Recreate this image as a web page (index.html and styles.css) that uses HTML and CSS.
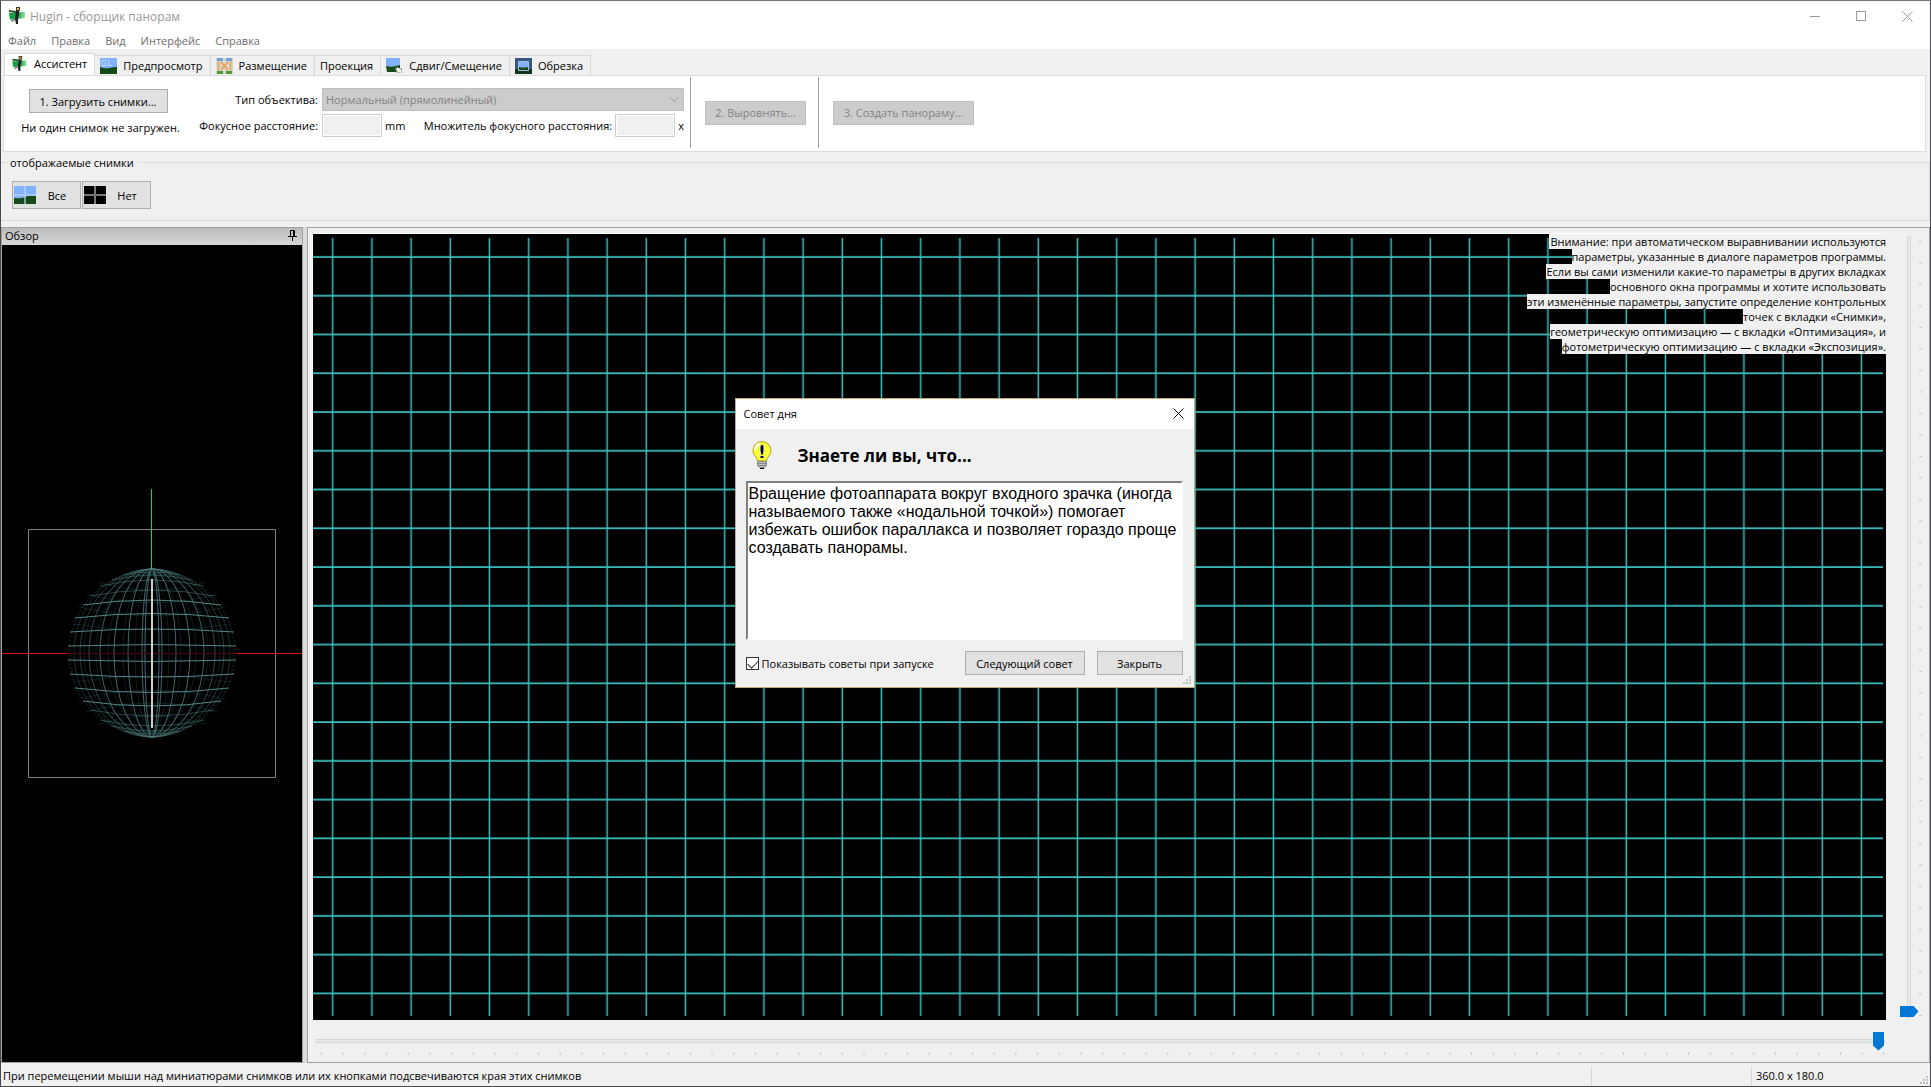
FILE: index.html
```html
<!DOCTYPE html>
<html lang="ru">
<head>
  <meta charset="UTF-8" />
  <meta name="viewport" content="width=device-width, initial-scale=1.0" />
  <title>Hugin - сборщик панорам</title>
  <link rel="stylesheet" href="styles.css">
</head>
<body>
  <!-- shared symbols -->
  <svg class="defs" width="0" height="0" aria-hidden="true">
    <defs>
      <linearGradient id="green" x1="0" y1="0" x2="1" y2="0">
        <stop offset="0" stop-color="#0f9838" />
        <stop offset="1" stop-color="#8fe8a4" />
      </linearGradient>
      <symbol id="logo" viewBox="0 0 16 18">
        <path d="M0 6h7v5l-6 2z" fill="#12a040" />
        <path d="M8 5h8v6l-8 1z" fill="url(#green)" />
        <path d="M0 3l7 1v2L0 5z" fill="#24502f" />
        <path d="M7 4h3v4l-1 3v6H7l-1-5z" fill="#1b2420" />
        <path d="M2 14l4-4v3l-3 2z" fill="#6b7a70" />
        <path d="M7 0h4v4H7z" fill="#3c3722" />
        <path d="M8 1h2v2H8z" fill="#d8c648" />
      </symbol>
      <symbol id="hills" viewBox="0 0 17 16">
        <path d="M0 0h17v16H0z" fill="#80b2ff" />
        <path d="M0 9q5 2 9 1t8-1v7H0z" fill="#164a18" />
      </symbol>
    </defs>
  </svg>

  <div class="window">
    <header class="titlebar">
      <svg class="logo"><use href="#logo" /></svg>
      <h1>Hugin - сборщик панорам</h1>
      <div class="window-buttons">
        <button type="button" aria-label="Свернуть"><svg width="11" height="11"><path d="M0 5.5h10" /></svg></button>
        <button type="button" aria-label="Развернуть"><svg width="11" height="11"><path d="M.5.5h9v9h-9z" /></svg></button>
        <button type="button" aria-label="Закрыть окно"><svg width="11" height="11"><path d="M.5.5l10 10M10.500.5l-10 10" /></svg></button>
      </div>
    </header>

    <nav class="menu">
      <a href="#">Файл</a>
      <a href="#">Правка</a>
      <a href="#">Вид</a>
      <a href="#">Интерфейс</a>
      <a href="#">Справка</a>
    </nav>

    <div class="tabs" role="tablist">
      <button type="button" class="tab active" role="tab" aria-selected="true">
        <svg class="tab-icon"><use href="#logo" /></svg>Ассистент
      </button>
      <button type="button" class="tab" role="tab">
        <svg class="tab-icon" viewBox="0 0 17 16">
          <use href="#hills" width="17" height="16" />
          <path d="M6 2.500H3q-1 0-1 1v3q0 1 1 1h3V5H4.500M8.500 2v5.500H12" fill="none" stroke="#c4dcff" />
        </svg>Предпросмотр
      </button>
      <button type="button" class="tab" role="tab">
        <svg class="tab-icon" viewBox="0 0 17 16">
          <path d="M0 0h17v16H0z" fill="#d8d6c8" />
          <path d="M1 0h6v3H1zM10 0h6v3h-6z" fill="#6da0d8" />
          <path d="M1 13h6v3H1zM10 13h6v3h-6z" fill="#4f9c34" />
          <path d="M2.500 3.500v9M14.500 3.500v9M5 4l7 8M12 4l-7 8" fill="none" stroke="#e69a50" stroke-width="1.500" />
        </svg>Размещение
      </button>
      <button type="button" class="tab" role="tab">Проекция</button>
      <button type="button" class="tab" role="tab">
        <svg class="tab-icon" viewBox="0 0 17 16">
          <path d="M0 0h14v9H0z" fill="#80b2ff" />
          <path d="M0 8q7 2 14-1v7H1z" fill="#164a18" />
          <path d="M9 10h7v5h-5z" fill="#a9b5a9" />
          <path d="M11 9l4 3v3l-4-2z" fill="#fff" />
        </svg>Сдвиг/Смещение
      </button>
      <button type="button" class="tab" role="tab">
        <svg class="tab-icon" viewBox="0 0 17 16">
          <path d="M0 0h17v16H0z" fill="#365984" />
          <path d="M0 11h17v5H0z" fill="#12331c" />
          <path d="M3.500 3.500h10v9h-10z" fill="#80b2ff" stroke="#a8bdcf" />
          <path d="M4 9q4 1 9 0v3H4z" fill="#164a18" />
        </svg>Обрезка
      </button>
    </div>

    <section class="assistant">
      <div class="load">
        <button type="button" class="btn">1. Загрузить снимки...</button>
        <p>Ни один снимок не загружен.</p>
      </div>
      <div class="lens">
        <label for="lens-type">Тип объектива:</label>
        <div class="select">
          <select id="lens-type" disabled>
            <option>Нормальный (прямолинейный)</option>
          </select>
          <svg class="chevron" width="9" height="6"><path d="M.5.5l4 4 4-4" /></svg>
        </div>
        <label for="focal">Фокусное расстояние:</label>
        <div class="lens-row">
          <input id="focal" type="text" disabled>
          <span class="unit">mm</span>
          <label for="crop">Множитель фокусного расстояния:</label>
          <input id="crop" type="text" disabled>
          <span>x</span>
        </div>
      </div>
      <div class="step">
        <button type="button" class="btn" disabled>2. Выровнять...</button>
      </div>
      <div class="step">
        <button type="button" class="btn wide" disabled>3. Создать панораму...</button>
      </div>
    </section>

    <fieldset class="images">
      <legend>отображаемые снимки</legend>
      <button type="button" class="btn image-btn">
        <svg width="22" height="18" viewBox="0 0 22 18">
          <path d="M0 0h22v18H0z" fill="#80b2ff" />
          <path d="M0 12q8 1 11-1t11-1v8H0z" fill="#164a18" />
          <path d="M0 9h22M11 0v18" stroke="#c6dcff" stroke-opacity=".6" stroke-width="2" />
        </svg>
        <span>Все</span>
      </button>
      <button type="button" class="btn image-btn">
        <svg width="22" height="18" viewBox="0 0 22 18">
          <path d="M0 0h22v18H0z" />
          <path d="M0 9h22M11 0v18" stroke="#777" stroke-width="2" />
        </svg>
        <span>Нет</span>
      </button>
    </fieldset>

    <main class="panes">
      <section class="overview">
        <div class="caption">
          <h2>Обзор</h2>
          <svg width="9" height="11"><path d="M2.500 6V.5h4V6M5.500 1v5M0 6.500h9M4.500 7v4" /></svg>
        </div>
        <div class="sphere">
          <svg viewBox="0 0 300 333" fill="none">
            <path d="M26.500 42.500h247v248h-247z" stroke="#808080" />
            <!-- far side -->
            <g stroke="#143030" stroke-opacity=".6">
              <ellipse cx="150" cy="166" rx="17" ry="78" />
              <ellipse cx="150" cy="166" rx="29" ry="79" />
              <ellipse cx="150" cy="166" rx="44" ry="79" />
              <ellipse cx="150" cy="166" rx="56" ry="80" />
              <ellipse cx="150" cy="166" rx="68" ry="80" />
              <path d="M71 137q79 12 158 0M76 120q74 17 148 0M84 107q66 18 132 0M96 95q54 16 108 0M71 195q79-12 158 0M76 212q74-17 148 0M84 225q66-18 132 0M96 237q54-16 108 0" />
            </g>
            <!-- meridians -->
            <g stroke="#4f7a7a" stroke-opacity=".85">
              <ellipse cx="150" cy="166" rx="7" ry="84" />
              <ellipse cx="150" cy="166" rx="10" ry="84" />
              <ellipse cx="150" cy="166" rx="24" ry="84" />
              <ellipse cx="150" cy="166" rx="38" ry="84" />
              <ellipse cx="150" cy="166" rx="52" ry="84" stroke-opacity=".8" />
              <ellipse cx="150" cy="166" rx="63" ry="84" stroke-opacity=".6" />
              <ellipse cx="150" cy="166" rx="72" ry="84" stroke-opacity=".45" />
              <ellipse cx="150" cy="166" rx="78" ry="84" stroke-opacity=".35" />
              <circle cx="150" cy="166" r="83" stroke-dasharray="2 2" stroke-opacity=".4" />
            </g>
            <!-- parallels -->
            <g stroke="#548686">
              <path d="M66 159q84-3 168 0M68 145q82-6 164 0M73 131q77-9 154 0M81 118q69-10 138 0" />
              <path d="M66 173q84 3 168 0M68 187q82 6 164 0M73 201q77 9 154 0M81 214q69 10 138 0" />
              <path d="M88 109q62-12 124 0M98 99q52-12 104 0M110 93q40-10 80 0M122 88q28-6 56 0" stroke-opacity=".5" />
              <path d="M88 223q62 12 124 0M98 233q52 12 104 0M110 239q40 10 80 0M122 244q28 6 56 0" stroke-opacity=".5" />
            </g>
            <path d="M0 166.500h65M235 166.500h65" stroke="#e00d0d" />
            <path d="M65 166.500h170" stroke="#4c0707" />
            <path d="M149.500 2v80" stroke="#12e412" />
            <path d="M150 92v149" stroke="#d0d0d0" stroke-width="2" />
          </svg>
        </div>
      </section>

      <section class="preview">
        <div class="canvas">
          <svg class="grid" viewBox="0 0 1573 786" preserveAspectRatio="none">
            <defs>
              <pattern id="meridians" x="-0.300" width="39.200" height="786" patternUnits="userSpaceOnUse">
                <path d="M20 0v786" stroke="#3ac0c0" stroke-width="1.500" />
              </pattern>
              <pattern id="parallels" y="3" width="1573" height="38.760" patternUnits="userSpaceOnUse">
                <path d="M0 20h1573" stroke="#3ac0c0" stroke-width="1.500" />
              </pattern>
            </defs>
            <path d="M0 4h1570v778H0z" fill="url(#meridians)" />
            <path d="M0 4h1570v778H0z" fill="url(#parallels)" />
          </svg>
          <p class="notice"><span>Внимание: при автоматическом выравнивании используются<br>параметры, указанные в диалоге параметров программы.<br>Если вы сами изменили какие-то параметры в других вкладках<br>основного окна программы и хотите использовать<br>эти изменённые параметры, запустите определение контрольных<br>точек с вкладки «Снимки»,<br>геометрическую оптимизацию — с вкладки «Оптимизация», и<br>фотометрическую оптимизацию — с вкладки «Экспозиция».</span></p>
        </div>
        <div class="vslider">
          <input type="range" min="0" max="180" value="180" aria-label="Вертикальный обзор">
          <svg class="ticks">
            <defs>
              <pattern id="vticks" width="4" height="21.500" patternUnits="userSpaceOnUse"><path d="M0 5.500h4" stroke="#c4c4c4" /></pattern>
            </defs>
            <rect width="3" height="100%" fill="url(#vticks)" />
          </svg>
        </div>
        <div class="hslider">
          <input type="range" min="0" max="360" value="360" aria-label="Горизонтальный обзор">
          <svg class="ticks">
            <defs>
              <pattern id="hticks" width="21.700" height="4" patternUnits="userSpaceOnUse"><path d="M5.500 0v4" stroke="#c4c4c4" /></pattern>
            </defs>
            <rect width="100%" height="3" fill="url(#hticks)" />
          </svg>
        </div>
      </section>
    </main>

    <footer class="status">
      <span class="hint">При перемещении мыши над миниатюрами снимков или их кнопками подсвечиваются края этих снимков</span>
      <span class="cell"></span>
      <span class="cell size">360.0 x 180.0</span>
      <svg class="grip" width="8" height="8"><path d="M6 0h2v2H6zM3 3h2v2H3zM6 3h2v2H6zM0 6h2v2H0zM3 6h2v2H3zM6 6h2v2H6z" /></svg>
    </footer>
  </div>

  <div class="dialog" role="dialog" aria-labelledby="tip-title">
    <div class="dialog-title">
      <h2 id="tip-title">Совет дня</h2>
      <button type="button" aria-label="Закрыть совет"><svg width="11" height="11"><path d="M.5.5l10 10M10.500.5l-10 10" /></svg></button>
    </div>
    <div class="dialog-body">
      <div class="tip-head">
        <svg width="20" height="28" viewBox="0 0 20 28">
          <path d="M10 .5a9 9 0 0 1 9 9c0 5-4 6-4.500 10.500h-9C5 15.500 1 14.500 1 9.500a9 9 0 0 1 9-9z" fill="#ffff38" stroke="#a8a41c" />
          <path d="M3 9q0-5 5-6" fill="none" stroke="#fff" stroke-width="2" />
          <path d="M8.500 5q1.500-2 3 0v5l-1 4h-1l-1-4zM8.500 15h3v2h-3z" fill="#000080" />
          <path d="M5.500 20.500h9v4l-2 2h-5l-2-2z" fill="#c4c4c4" stroke="#888" />
          <path d="M6 22.500h8M6 24.500h8" stroke="#808080" />
          <path d="M8 27h4v1H8z" />
        </svg>
        <h3>Знаете ли вы, что...</h3>
      </div>
      <textarea aria-label="Совет" readonly>Вращение фотоаппарата вокруг входного зрачка (иногда называемого также «нодальной точкой») помогает избежать ошибок параллакса и позволяет гораздо проще создавать панорамы.</textarea>
      <div class="tip-actions">
        <label><input type="checkbox" checked>Показывать советы при запуске</label>
        <button type="button" class="btn next">Следующий совет</button>
        <button type="button" class="btn close">Закрыть</button>
      </div>
    </div>
    <svg class="grip" width="8" height="8"><path d="M6 0h2v2H6zM3 3h2v2H3zM6 3h2v2H6zM0 6h2v2H0zM3 6h2v2H3zM6 6h2v2H6z" /></svg>
  </div>
</body>
</html>
```
FILE: styles.css
```css
* {
  box-sizing: border-box;
}

body {
  margin: 0;
  font-family: 'Open Sans', 'Noto Sans', sans-serif;
  font-size: 11px;
  line-height: 15px;
  color: #000;
}

h1, h2, h3, p {
  margin: 0;
  font-size: inherit;
  font-weight: normal;
}

button, input, select, textarea {
  font: inherit;
  color: inherit;
  margin: 0;
}

button {
  background: none;
  border: 0;
  padding: 0;
}

svg {
  display: block;
  flex: none;
}

.defs {
  position: absolute;
}

.window {
  display: flex;
  flex-direction: column;
  height: 100vh;
  border: 1px solid #4a4a4e;
  border-top-color: #6b7580;
  background-color: #f0f0f0;
}

/* title and menu */
.titlebar {
  display: flex;
  align-items: center;
  height: 30px;
  padding-left: 8px;
  background-color: #fff;
  color: #999;
}

.titlebar h1 {
  flex: 1;
  font-size: 12px;
}

.logo {
  width: 16px;
  height: 18px;
  margin-right: 5px;
}

.window-buttons {
  display: flex;
}

.window-buttons button {
  display: grid;
  place-items: center;
  width: 46px;
  height: 28px;
}

.window-buttons path {
  fill: none;
  stroke: #999;
}

.menu {
  display: flex;
  gap: 15px;
  height: 18px;
  padding: 2px 7px;
  background-color: #fff;
}

.menu a {
  color: #6d6d6d;
  text-decoration: none;
}

/* notebook */
.tabs {
  display: flex;
  align-items: flex-end;
  padding: 4px 3px 0;
}

.tab {
  display: flex;
  align-items: center;
  gap: 6px;
  height: 20px;
  padding: 0 7px 0 5px;
  border: 1px solid #d9d9d9;
  border-width: 1px 1px 0 0;
}

.tab.active {
  height: 23px;
  margin-bottom: -1px;
  padding: 0 7px 3px 6px;
  border-left-width: 1px;
  background-color: #fff;
}

.tab-icon {
  width: 17px;
  height: 16px;
}

.assistant {
  display: flex;
  height: 77px;
  margin: 0 4px 0 2px;
  padding: 1px 0 2px;
  border: 1px solid #dcdcdc;
  background-color: #fff;
}

.btn {
  height: 24px;
  border: 1px solid #adadad;
  background-color: #e1e1e1;
  white-space: nowrap;
}

.btn:disabled {
  border-color: #bfbfbf;
  background-color: #ccc;
  color: #838383;
}

.load {
  display: flex;
  flex-direction: column;
  align-items: center;
  gap: 7px;
  width: 192px;
  padding: 12px 4px 0 0;
  white-space: nowrap;
}

.load .btn {
  width: 139px;
}

.load p {
  padding-left: 5px;
}

.lens {
  display: grid;
  grid-template-columns: 122px 362px;
  gap: 3px 4px;
  align-items: center;
  align-content: start;
  width: 494px;
  padding-top: 11px;
  white-space: nowrap;
}

.lens > label {
  text-align: right;
}

.select {
  position: relative;
}

.select select {
  display: block;
  width: 100%;
  height: 23px;
  padding: 0 3px;
  border: 1px solid #bfbfbf;
  border-radius: 0;
  background-color: #ccc;
  color: #838383;
  opacity: 1;
  appearance: none;
}

.chevron {
  position: absolute;
  right: 5px;
  top: 9px;
  fill: none;
  stroke: #9a9a9a;
}

.lens-row {
  display: flex;
  align-items: center;
  gap: 3px;
}

.lens-row input {
  width: 60px;
  height: 23px;
  border: 1px solid #ccc;
  background-color: #f0f0f0;
  box-shadow: inset 0 0 0 1px #fff;
}

.lens-row label {
  flex: 1;
  text-align: right;
}

.step {
  display: flex;
  align-items: center;
  height: 71px;
  padding: 0 12px 0 14px;
  border-left: 1px solid #a0a0a0;
}

.step .btn {
  width: 101px;
}

.step .btn.wide {
  width: 141px;
}

/* displayed images */
.images {
  display: flex;
  gap: 1px;
  margin: 3px 0 0;
  padding: 11px 11px 11px;
  border: 1px solid #dcdcdc;
  border-left: 0;
}

.images legend {
  margin-left: -4px;
  padding: 0 4px 0 2px;
}

.image-btn {
  display: flex;
  align-items: center;
  width: 69px;
  height: 28px;
  padding-left: 1px;
}

.image-btn span {
  flex: 1;
  padding-right: 2px;
}

/* panes */
.panes {
  display: flex;
  flex: 1;
  gap: 4px;
  min-height: 0;
  margin-top: 6px;
  background-color: #dcdcdc;
}

.overview {
  display: flex;
  flex-direction: column;
  width: 302px;
  border: 1px solid #a0a0a0;
}

.caption {
  display: flex;
  align-items: center;
  justify-content: space-between;
  height: 17px;
  padding: 0 5px 2px 3px;
  background-image: linear-gradient(#bababa, #d8d8d8);
}

.caption path {
  fill: none;
  stroke: #000;
}

.sphere {
  display: flex;
  flex: 1;
  align-items: center;
  background-color: #000;
}

.sphere svg {
  width: 100%;
}

.preview {
  display: grid;
  grid-template: minmax(0, 1fr) 42px / 1fr 43px;
  flex: 1;
  padding: 6px 0 0 5px;
  border: 1px solid #a0a0a0;
  background-color: #f0f0f0;
}

.canvas {
  position: relative;
  background-color: #000;
  box-shadow: -1px -1px #fff;
}

.grid {
  position: absolute;
  width: 100%;
  height: 100%;
}

.notice {
  position: absolute;
  top: 0;
  right: 0;
  text-align: right;
  white-space: nowrap;
}

.notice span {
  padding-left: 1px;
  background-color: #f0f0f0;
}

/* sliders */
.vslider {
  display: flex;
  min-height: 0;
  padding: 2px 0 2px 13px;
}

.hslider {
  padding: 11px 1px 0 3px;
}

input[type="range"] {
  appearance: none;
  background: none;
}

input[type="range"]::-webkit-slider-runnable-track {
  border: 1px solid #d6d6d6;
  background-color: #e7eaea;
}

input[type="range"]::-webkit-slider-thumb {
  appearance: none;
  background-color: #0078d7;
}

.vslider input {
  width: 19px;
  height: 100%;
  writing-mode: vertical-lr;
}

.vslider input::-webkit-slider-runnable-track {
  width: 4px;
}

.vslider input::-webkit-slider-thumb {
  width: 19px;
  height: 11px;
  margin-left: -8px;
  clip-path: polygon(0 0, 14px 0, 100% 50%, 14px 100%, 0 100%);
}

.vslider .ticks {
  width: 4px;
  height: 100%;
  margin-left: 1px;
}

.hslider input {
  display: block;
  width: 100%;
  height: 19px;
}

.hslider input::-webkit-slider-runnable-track {
  height: 4px;
}

.hslider input::-webkit-slider-thumb {
  width: 11px;
  height: 19px;
  margin-top: -8px;
  clip-path: polygon(0 0, 100% 0, 100% 14px, 50% 100%, 0 14px);
}

.hslider .ticks {
  width: 100%;
  height: 4px;
  margin-top: 2px;
}

/* status bar */
.status {
  display: flex;
  align-items: center;
  height: 23px;
  padding: 2px 0 0 2px;
}

.hint {
  flex: 1;
}

.cell {
  width: 160px;
  height: 20px;
  padding: 2px 4px;
  border-left: 1px solid #d7d7d7;
}

.cell.size {
  width: 179px;
}

.grip {
  position: absolute;
  right: 3px;
  bottom: 3px;
  fill: #bfbfbf;
}

/* tip of the day */
.dialog {
  position: absolute;
  top: 398px;
  left: calc(50% - 231px);
  width: 460px;
  border: 1px solid #c3a878;
  background-color: #f0f0f0;
}

.dialog-title {
  display: flex;
  align-items: center;
  justify-content: space-between;
  height: 30px;
  padding: 0 10px 2px 8px;
  background-color: #fff;
}

.dialog-title path {
  fill: none;
  stroke: #000;
}

.dialog-body {
  padding: 11px 11px 12px 10px;
}

.tip-head {
  display: flex;
  align-items: center;
  gap: 26px;
  padding-left: 6px;
}

.tip-head h3 {
  padding-top: 1px;
  font-size: 17px;
  font-weight: bold;
  line-height: 29px;
}

textarea {
  display: block;
  width: 100%;
  height: 159px;
  margin: 11px 0 11px;
  padding: 2px 1px;
  border: 2px solid;
  border-color: #808080 #fff #fff #808080;
  border-radius: 0;
  outline: 0;
  resize: none;
  background-color: #fff;
  font-family: 'Liberation Sans', Arial, sans-serif;
  font-size: 16px;
  line-height: 18px;
}

.tip-actions {
  display: flex;
  align-items: center;
}

.tip-actions label {
  display: flex;
  flex: 1;
  align-items: center;
  gap: 3px;
}

.tip-actions input {
  width: 13px;
  height: 13px;
  border: 1px solid #333;
  background-color: #fff;
  appearance: none;
}

.tip-actions input:checked::before {
  content: "";
  display: block;
  width: 9px;
  height: 5px;
  margin: 2px 1px;
  border: solid #333;
  border-width: 0 0 1px 1px;
  transform: rotate(-45deg);
}

.next {
  width: 120px;
  margin-right: 12px;
}

.close {
  width: 86px;
}
```
